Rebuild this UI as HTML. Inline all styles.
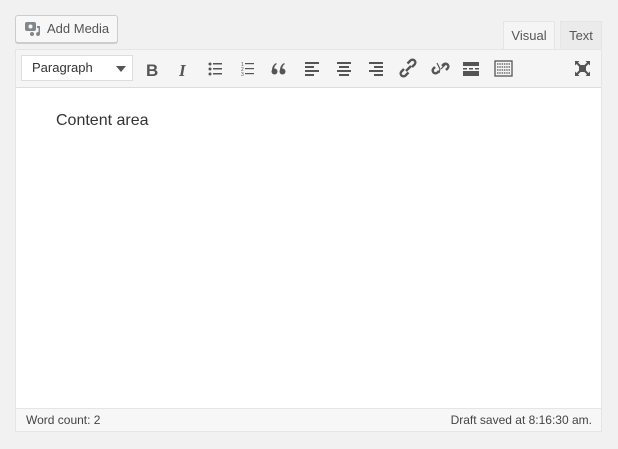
<!DOCTYPE html>
<html><head><style>
body{margin:0;background:#f1f1f1;width:618px;height:449px;position:relative;font-family:"Liberation Sans",sans-serif;overflow:hidden}
.btn{position:absolute;left:15px;top:15px;width:101px;height:26px;border:1px solid #ccc;border-radius:3px;background:#f7f7f7;box-shadow:0 1px 0 #ccc;color:#555;font-size:13px;line-height:26px}
.btn span{position:absolute;left:31px}
.tab{position:absolute;top:21px;height:28px;font-size:13px;line-height:28px;color:#555;text-align:center;box-sizing:border-box;border:1px solid #e5e5e5;border-bottom:none}
.ed{position:absolute;left:15px;top:49px;width:585px;height:381px;border:1px solid #e5e5e5;background:#fff}
.tb{position:absolute;left:0;top:0;right:0;height:37px;background:#f5f5f5;border-bottom:1px solid #ddd}
.sel{position:absolute;left:5px;top:5px;width:110px;height:24px;border:1px solid #ddd;background:#fff;font-size:13px;color:#333;line-height:24px;text-indent:10px}
.sel:after{content:"";position:absolute;right:6px;top:10px;border:5px solid transparent;border-top:6px solid #555}
.ic{position:absolute;top:9px}
.st{position:absolute;left:0;right:0;bottom:0;height:22px;background:#f7f7f7;border-top:1px solid #e5e5e5;font-size:12px;color:#444;line-height:22px}
</style></head><body>
<div class="btn"><svg style="position:absolute;left:8px;top:5px" width="18" height="16" viewBox="0 0 18 16"><rect x="1" y="1" width="11" height="9" rx="2" fill="#82878c"/><circle cx="6.5" cy="5.5" r="2" fill="#f7f7f7"/><path d="M13 5h3v8a2 2 0 1 1-1.5-1.9V7H13z" fill="#82878c"/><circle cx="8" cy="13" r="2" fill="#82878c"/></svg><span>Add Media</span></div>
<div class="tab" style="left:503px;width:52px;background:#f5f5f5;color:#555">Visual</div>
<div class="tab" style="left:560px;width:42px;background:#ebebeb">Text</div>
<div class="ed">
<div class="tb">
<div class="sel">Paragraph</div>
<svg class="ic" style="left:0;top:0" width="585" height="37" fill="#555" stroke="#555">
<text x="130" y="26" font-size="17" font-weight="bold" stroke="none" font-family="Liberation Sans">B</text>
<text x="163" y="26" font-size="17" font-weight="bold" font-style="italic" stroke="none" font-family="Liberation Serif">I</text>
<g stroke="none"><circle cx="194" cy="14" r="1.5"/><circle cx="194" cy="19" r="1.5"/><circle cx="194" cy="24" r="1.5"/><rect x="197" y="13" width="9" height="1.5"/><rect x="197" y="18" width="9" height="1.5"/><rect x="197" y="23" width="9" height="1.5"/>
<text x="225" y="16" font-size="5">1</text><text x="225" y="21" font-size="5">2</text><text x="225" y="26" font-size="5">3</text><rect x="229" y="13" width="9" height="1.2"/><rect x="229" y="18" width="9" height="1.2"/><rect x="229" y="23" width="9" height="1.2"/>
<circle cx="258.5" cy="21.5" r="3"/><path d="M256 21c0-4 1-6 4-8l0.8 1c-2 1.5-2.6 3-2.6 6z"/>
<circle cx="266.5" cy="21.5" r="3"/><path d="M264 21c0-4 1-6 4-8l0.8 1c-2 1.5-2.6 3-2.6 6z"/>
<rect x="289" y="12" width="14" height="2"/><rect x="289" y="16" width="9" height="2"/><rect x="289" y="20" width="14" height="2"/><rect x="289" y="24" width="9" height="2"/>
<rect x="321" y="12" width="14" height="2"/><rect x="323" y="16" width="10" height="2"/><rect x="321" y="20" width="14" height="2"/><rect x="323" y="24" width="10" height="2"/>
<rect x="353" y="12" width="14" height="2"/><rect x="358" y="16" width="9" height="2"/><rect x="353" y="20" width="14" height="2"/><rect x="358" y="24" width="9" height="2"/>
<rect x="447" y="12" width="16" height="4"/><rect x="447" y="18" width="4" height="1.5"/><rect x="453" y="18" width="4" height="1.5"/><rect x="459" y="18" width="4" height="1.5"/><rect x="447" y="21" width="16" height="5"/>
</g>
<g fill="none" stroke-width="2.4"><path d="M388 19l-2.5 2.5a2.6 2.6 0 0 0 4 4l3-3M396 17l2.5-2.5a2.6 2.6 0 0 0-4-4l-3 3M390 21l5-5"/>
<path d="M419 17l-1.5 1.5a2.6 2.6 0 0 0 4 4l1.5-1.5M430 20l1.5-1.5a2.6 2.6 0 0 0-4-4L426 16"/></g>
<g stroke-width="1.2"><path d="M424 19l-3-6M425 19l5-5M424 19l-1 4"/></g>
<g fill="none" stroke-width="1.3"><rect x="479" y="11" width="17" height="15"/><path d="M481 14h13M481 17h13M481 20h13M481 23h13" stroke-dasharray="1.5 0.8"/></g>
<g stroke="none"><path d="M559 11h4.5l-1.5 1.5 3 3-1.5 1.5-3-3L559 15.5z"/><path d="M574 11h-4.5l1.5 1.5-3 3 1.5 1.5 3-3L574 15.5z"/><path d="M559 26h4.5l-1.5-1.5 3-3-1.5-1.5-3 3L559 21.5z"/><path d="M574 26h-4.5l1.5-1.5-3-3 1.5-1.5 3 3L574 21.5z"/><rect x="563" y="15" width="7" height="7"/></g>
</svg>
</div>
<div style="position:absolute;left:40px;top:62px;font-size:16px;color:#333">Content area</div>
<div class="st"><span style="position:absolute;left:10px">Word count: 2</span><span style="position:absolute;right:9px">Draft saved at 8:16:30 am.</span></div>
</div>
</body></html>
